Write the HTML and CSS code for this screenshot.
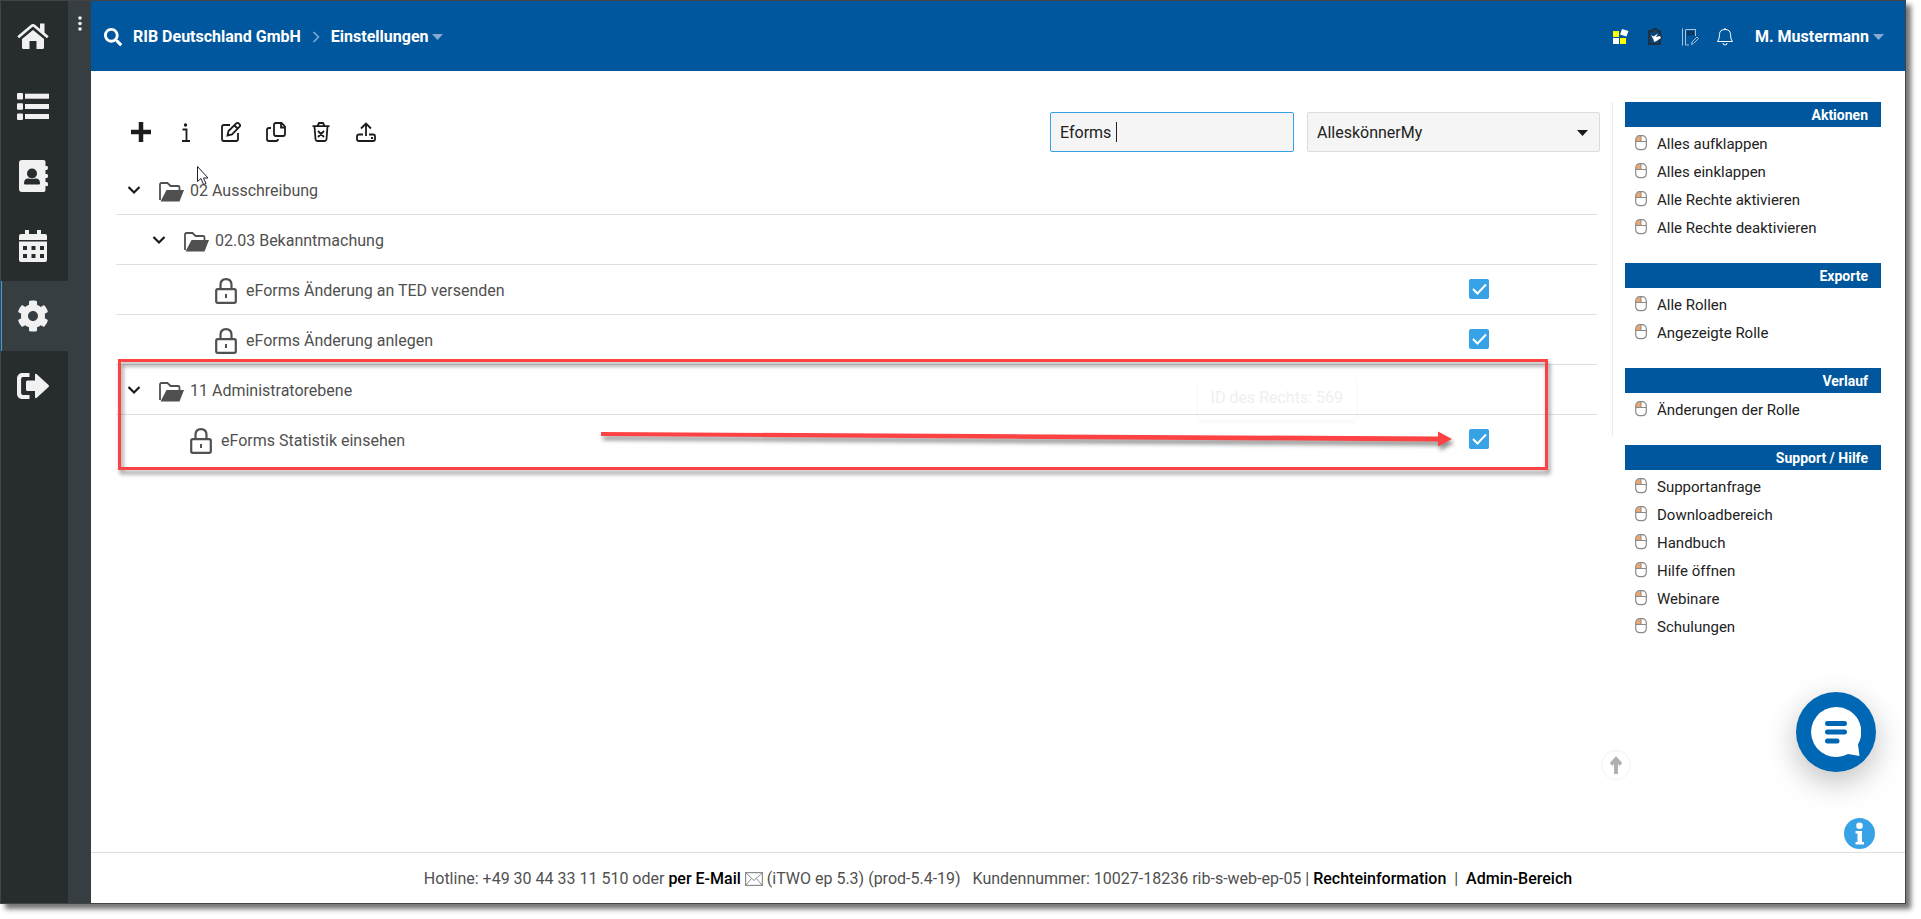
FILE: index.html
```html
<!DOCTYPE html>
<html lang="de">
<head>
<meta charset="utf-8">
<meta name="viewport" content="width=device-width, initial-scale=1">
<title>Einstellungen – RIB Deutschland GmbH</title>
<link rel="stylesheet" href="styles.css">
</head>
<body>
<svg class="sprite" aria-hidden="true">
  <symbol id="mouse" viewBox="0 0 12 16"><path d="M1 5.5Q1 1 6 1V6H1z" fill="#f4a468"/><rect x=".7" y=".7" width="10.6" height="14" rx="4" fill="none" stroke="#8a8a8a" stroke-width="1.2"/><path d="M1 6.5h10M6 1v5.500" stroke="#8a8a8a" fill="none"/></symbol>
  <symbol id="chevron" viewBox="0 0 14 10"><path d="M1.500 2l5.500 5.500L12.500 2" fill="none" stroke="#1a1a1a" stroke-width="2.200"/></symbol>
  <symbol id="folder" viewBox="0 0 25 20"><path d="M1 18V2.500Q1 1 2.500 1h6l3 3H19q1.500 0 1.500 1.500V8" fill="none" stroke="#505050" stroke-width="1.800"/><path d="M7.500 8H25l-4.500 11.500H1.500z" fill="#505050"/></symbol>
  <symbol id="lock" viewBox="0 0 22 26"><rect x="1.200" y="11.200" width="19.600" height="13.600" rx="1.500" fill="none" stroke="#505050" stroke-width="2.200"/><path d="M5.500 11V7Q5.500 1.200 11 1.200T16.500 7v4" fill="none" stroke="#505050" stroke-width="2.200"/><path d="M11 16v4" stroke="#505050" stroke-width="2"/></symbol>
</svg>
<div class="app">
  <nav class="rail" aria-label="Hauptnavigation">
    <a class="rail-item" href="#" aria-label="Startseite"><svg width="32" height="26" viewBox="0 0 32 26" fill="#f1f1f1"><path d="M16 7L5 16V24.500Q5 26 6.500 26h6v-8h7v8h6q1.500 0 1.500-1.500V16z"/><path d="M1.200 14.200L14.500 3Q16 1.700 17.500 3L30.800 14.200" fill="none" stroke="#f1f1f1" stroke-width="2.800"/><path d="M23 .500h4.500v10L23 6.500z"/></svg></a>
    <a class="rail-item" href="#" aria-label="Liste"><svg width="32" height="27" viewBox="0 0 32 27" fill="#f1f1f1"><rect y="0" width="6" height="6.500" rx="1"/><rect y="10.200" width="6" height="6.500" rx="1"/><rect y="20.400" width="6" height="6.500" rx="1"/><rect x="8" y=".700" width="24" height="5"/><rect x="8" y="11" width="24" height="5"/><rect x="8" y="21" width="24" height="5"/></svg></a>
    <a class="rail-item" href="#" aria-label="Kontakte"><svg width="29" height="32" viewBox="0 0 29 32"><path d="M3 0h21.500q2 0 2 2v4H28q1 0 1 1.500T28 10h-1.500v4H28q1 0 1 2t-1 2h-1.500v4H28q1 0 1 2.500t-1 1.500h-1.500v4q0 2-2 2H3q-3 0-3-3V3q0-3 3-3z" fill="#f1f1f1"/><circle cx="13" cy="13.500" r="5" fill="#272d2f"/><path d="M5 23.500q0-5.500 5-5 3 1 6 0 5-.5 5 5 0 1-1 1H6q-1 0-1-1z" fill="#272d2f"/></svg></a>
    <a class="rail-item" href="#" aria-label="Kalender"><svg width="28" height="32" viewBox="0 0 28 32"><path d="M0 10V6q0-2 2-2h4V0h4v4h8V0h4v4h4q2 0 2 2v4zM0 11.500h28V30q0 2-2 2H2q-2 0-2-2z" fill="#f1f1f1"/><path d="M4 16h4v4H4zm8.500 0h4v4h-4zm8.500 0h4v4h-4zM4 24h4v4H4zm8.500 0h4v4h-4zm8.500 0h4v4h-4z" fill="#272d2f"/></svg></a>
    <a class="rail-item rail-active" href="#" aria-label="Einstellungen"><svg width="32" height="32" viewBox="0 0 512 512"><path fill="#f1f1f1" d="M487.400 315.700l-42.600-24.600c4.300-23.200 4.300-47 0-70.200l42.600-24.600c4.900-2.800 7.100-8.600 5.500-14-11.100-35.600-30-67.800-54.700-94.600-3.800-4.100-10-5.100-14.800-2.300L380.800 110c-17.900-15.400-38.500-27.300-60.800-35.100V25.800c0-5.600-3.900-10.500-9.400-11.700-36.700-8.200-74.300-7.800-109.200 0-5.500 1.200-9.400 6.100-9.400 11.700V75c-22.200 7.900-42.800 19.800-60.800 35.100L88.700 85.500c-4.900-2.800-11-1.900-14.800 2.300-24.700 26.700-43.600 58.900-54.700 94.600-1.700 5.400.6 11.200 5.500 14L67.300 221c-4.300 23.200-4.300 47 0 70.200l-42.600 24.600c-4.900 2.800-7.100 8.600-5.500 14 11.100 35.600 30 67.800 54.700 94.600 3.800 4.100 10 5.100 14.800 2.300l42.600-24.600c17.900 15.400 38.500 27.300 60.800 35.100v49.200c0 5.600 3.900 10.500 9.400 11.700 36.700 8.200 74.300 7.800 109.200 0 5.500-1.200 9.400-6.100 9.400-11.700v-49.200c22.200-7.900 42.800-19.800 60.800-35.100l42.600 24.600c4.900 2.800 11 1.900 14.800-2.300 24.700-26.700 43.600-58.900 54.700-94.600 1.500-5.500-.7-11.300-5.600-14.100zM256 336c-44.100 0-80-35.900-80-80s35.900-80 80-80 80 35.900 80 80-35.900 80-80 80z"/></svg></a>
    <a class="rail-item" href="#" aria-label="Abmelden"><svg width="32" height="26" viewBox="0 0 32 26"><path d="M12.500 2H6Q2 2 2 6v14q0 4 4 4h6.500" fill="none" stroke="#f1f1f1" stroke-width="4.200"/><path d="M9 9q0-1.500 1.500-1.500H18V1.500Q18 .500 19.500 1L31.500 12q1 1 0 2L19.500 25q-1.500.5-1.500-1v-6h-7.500Q9 18 9 16.500z" fill="#f1f1f1"/></svg></a>
  </nav>
  <div class="subrail"><button class="dots" type="button" aria-label="Menü"><svg width="4" height="16" viewBox="0 0 4 16" fill="#f1f1f1"><circle cx="2" cy="2" r="1.800"/><circle cx="2" cy="7.500" r="1.800"/><circle cx="2" cy="13" r="1.800"/></svg></button></div>
  <div class="page">
    <header class="topbar">
      <button class="icon-button search" type="button" aria-label="Suche"><svg width="18" height="18" viewBox="0 0 512 512"><path fill="#fff" d="M505 442.700L405.300 343c-4.500-4.500-10.600-7-17-7H372c27.600-35.300 44-79.700 44-128C416 93.100 322.900 0 208 0S0 93.100 0 208s93.100 208 208 208c48.300 0 92.700-16.400 128-44v16.300c0 6.400 2.500 12.500 7 17l99.700 99.700c9.400 9.400 24.600 9.400 33.900 0l28.300-28.300c9.400-9.400 9.400-24.600.1-34zM208 336c-70.700 0-128-57.200-128-128 0-70.700 57.200-128 128-128 70.700 0 128 57.200 128 128 0 70.700-57.200 128-128 128z"/></svg></button>
      <a class="crumb" href="#">RIB Deutschland GmbH</a>
      <svg class="crumb-sep" width="8" height="12" viewBox="0 0 8 12"><path d="M1.500 1l5 5-5 5" fill="none" stroke="#85abd0" stroke-width="1.500"/></svg>
      <a class="crumb" href="#">Einstellungen<svg class="caret" width="11" height="6" viewBox="0 0 11 6"><path d="M0 0h11L5.500 6z" fill="#85abd0"/></svg></a>
      <div class="top-actions">
        <button class="icon-button" type="button" aria-label="Module"><svg width="18" height="18" viewBox="0 0 18 18"><path d="M2 3h6v6H2z" fill="#ff0"/><path d="M2 10h6v6H2z" fill="#fff"/><path d="M9 10h6v6H9z" fill="#ff0"/><path d="M11.500 2l5 1.500-1.500 4-5-1.500z" fill="#fff" stroke="#fff" stroke-width="1.500"/></svg></button>
        <button class="icon-button" type="button" aria-label="Aufgaben"><svg width="18" height="18" viewBox="0 0 18 18"><path d="M3 3h3l2-2h2l2 2h2v4l1.500 2-1.500 2v5H3z" fill="#0b4474" stroke="#1d3040" stroke-width="1.800"/><path d="M5 7l2.500 1.500L12 5.500l-2 3.500L14 8l1 2-4.500 3L8 14l-.500-2.500z" fill="#fff"/></svg></button>
        <button class="icon-button" type="button" aria-label="Notizen"><svg width="18" height="18" viewBox="0 0 18 18" fill="none" stroke="#a9c5de"><path d="M1.500.500v17M4.500 17V1.500M14.500 1v7M4.500 17H8M5 1.500h9"/><path d="M7 4h5v2.500H7z" fill="#00579d" stroke="#122c44" stroke-width="1.500"/><path d="M10.500 16.500l.5-2.500 5-5 1.500 1.500-5 5z"/></svg></button>
        <button class="icon-button" type="button" aria-label="Benachrichtigungen"><svg width="18" height="18" viewBox="0 0 18 18" fill="none" stroke="#fff"><path d="M1.500 13.500q2-2 2-7Q3.500 1.500 9 1.500t5.500 5q0 5 2 7z"/><path d="M7 15q0 2 2 2t2-2M9 0v1.500"/></svg></button>
        <a class="crumb user" href="#">M. Mustermann<svg class="caret" width="11" height="6" viewBox="0 0 11 6"><path d="M0 0h11L5.500 6z" fill="#85abd0"/></svg></a>
      </div>
    </header>
    <div class="content">
      <main class="main">
        <div class="toolbar">
          <div class="tools">
            <button class="tool" type="button" aria-label="Neu"><svg width="20" height="20" viewBox="0 0 20 20"><path d="M10 0v20M0 10h20" stroke="#1c1c1c" stroke-width="4.500"/></svg></button>
            <button class="tool" type="button" aria-label="Info"><svg width="20" height="20" viewBox="0 0 20 20"><circle cx="9.500" cy="3" r="1.700" fill="#1c1c1c"/><path d="M6.500 7.500h4V19M6 19h8" fill="none" stroke="#1c1c1c" stroke-width="1.800"/></svg></button>
            <button class="tool" type="button" aria-label="Bearbeiten"><svg width="20" height="20" viewBox="0 0 20 20" fill="none" stroke="#1c1c1c" stroke-width="1.800"><path d="M9 3H3Q1 3 1 5v12q0 2 2 2h12q2 0 2-2v-6"/><path d="M6.500 13.500l1-4.500L15.500 1.200q1-.700 2 0l1.300 1.300q.700 1 0 2L11 12.500zM13.500 3.500l3 3"/></svg></button>
            <button class="tool" type="button" aria-label="Kopieren"><svg width="20" height="20" viewBox="0 0 20 20" fill="none" stroke="#1c1c1c" stroke-width="1.800"><path d="M10 1h5.500L19 4.500V12q0 2-2 2h-7q-2 0-2-2V3q0-2 2-2z"/><path d="M15 1v4.500h4M5 6H3Q1 6 1 8v9q0 2 2 2h7q2 0 2-2"/></svg></button>
            <button class="tool" type="button" aria-label="Löschen"><svg width="20" height="20" viewBox="0 0 20 20" fill="none" stroke="#1c1c1c" stroke-width="1.800"><path d="M1.500 4.200h17M3.500 4.500L4.500 17q.200 2 2 2h7q1.800 0 2-2l1-12.500M6.500 4l1.500-3h4l1.500 3M7 9l6 6m0-6l-6 6"/></svg></button>
            <button class="tool" type="button" aria-label="Hochladen"><svg width="20" height="20" viewBox="0 0 20 20" fill="none" stroke="#1c1c1c" stroke-width="1.800"><path d="M10 14V1.500M5 6.500l5-5 5 5M7 12.500H3q-2 0-2 2V17q0 2 2 2h14q2 0 2-2v-2.500q0-2-2-2h-4M15 16h2"/></svg></button>
          </div>
          <div class="filters">
            <div class="field search-field"><input class="control control-focus" type="text" value="Eforms " aria-label="Rechte suchen"><span class="text-cursor"></span></div>
            <div class="field role-field"><select class="control" aria-label="Rolle"><option>AlleskönnerMy</option></select><svg class="select-caret" width="11" height="6" viewBox="0 0 11 6"><path d="M0 0h11L5.500 6z" fill="#1a1a1a"/></svg></div>
          </div>
        </div>
        <div class="tree">
          <div class="row"><button class="toggle" type="button" aria-label="Einklappen"><svg width="14" height="10"><use href="#chevron"/></svg></button><svg class="folder" width="25" height="20"><use href="#folder"/></svg><span class="name">02 Ausschreibung</span><svg class="pointer" width="14" height="21" viewBox="0 0 14 21"><path d="M1.500 1.500v15l3.500-3 2.500 6 2.500-1-2.500-5.500h4.500z" fill="#fff" stroke="#222236" stroke-width="1"/></svg></div>
          <div class="row level-1"><button class="toggle" type="button" aria-label="Einklappen"><svg width="14" height="10"><use href="#chevron"/></svg></button><svg class="folder" width="25" height="20"><use href="#folder"/></svg><span class="name">02.03 Bekanntmachung</span></div>
          <div class="row level-2"><svg class="lock" width="22" height="26"><use href="#lock"/></svg><label class="name" for="r1">eForms Änderung an TED versenden</label><input class="check" type="checkbox" id="r1" checked></div>
          <div class="row level-2"><svg class="lock" width="22" height="26"><use href="#lock"/></svg><label class="name" for="r2">eForms Änderung anlegen</label><input class="check" type="checkbox" id="r2" checked></div>
          <div class="highlighted">
            <div class="row"><button class="toggle" type="button" aria-label="Einklappen"><svg width="14" height="10"><use href="#chevron"/></svg></button><svg class="folder" width="25" height="20"><use href="#folder"/></svg><span class="name">11 Administratorebene</span></div>
            <div class="row level-1 last"><svg class="lock" width="22" height="26"><use href="#lock"/></svg><label class="name" for="r3">eForms Statistik einsehen</label><input class="check" type="checkbox" id="r3" checked></div>
            <div class="tooltip" role="tooltip">ID des Rechts: 569</div>
            <div class="marker"></div>
            <svg class="arrow" width="852" height="16" viewBox="0 0 852 16"><path d="M1 1L838 5.500V.500L852 8l-14 7.500v-5L1 5z" fill="#fc4242"/></svg>
          </div>
        </div>
      </main>
      <aside class="side">
        <div class="side-group">
          <section class="panel"><h2>Aktionen</h2><ul>
            <li><svg width="12" height="16"><use href="#mouse"/></svg><a href="#">Alles aufklappen</a></li>
            <li><svg width="12" height="16"><use href="#mouse"/></svg><a href="#">Alles einklappen</a></li>
            <li><svg width="12" height="16"><use href="#mouse"/></svg><a href="#">Alle Rechte aktivieren</a></li>
            <li><svg width="12" height="16"><use href="#mouse"/></svg><a href="#">Alle Rechte deaktivieren</a></li></ul></section>
          <section class="panel"><h2>Exporte</h2><ul>
            <li><svg width="12" height="16"><use href="#mouse"/></svg><a href="#">Alle Rollen</a></li>
            <li><svg width="12" height="16"><use href="#mouse"/></svg><a href="#">Angezeigte Rolle</a></li></ul></section>
          <section class="panel"><h2>Verlauf</h2><ul>
            <li><svg width="12" height="16"><use href="#mouse"/></svg><a href="#">Änderungen der Rolle</a></li></ul></section>
        </div>
        <div class="side-help">
          <section class="panel"><h2>Support / Hilfe</h2><ul>
            <li><svg width="12" height="16"><use href="#mouse"/></svg><a href="#">Supportanfrage</a></li>
            <li><svg width="12" height="16"><use href="#mouse"/></svg><a href="#">Downloadbereich</a></li>
            <li><svg width="12" height="16"><use href="#mouse"/></svg><a href="#">Handbuch</a></li>
            <li><svg width="12" height="16"><use href="#mouse"/></svg><a href="#">Hilfe öffnen</a></li>
            <li><svg width="12" height="16"><use href="#mouse"/></svg><a href="#">Webinare</a></li>
            <li><svg width="12" height="16"><use href="#mouse"/></svg><a href="#">Schulungen</a></li></ul></section>
        </div>
      </aside>
    </div>
    <footer class="footer"><p>Hotline: +49 30 44 33 11 510 oder <a href="#">per E-Mail</a> <svg class="mail" width="18" height="14" viewBox="0 0 18 14" fill="none" stroke="#8c8c8c"><rect x=".500" y=".500" width="17" height="13" stroke-width="1.400"/><path d="M1 1l8 7.500L17 1M1 13l5.500-6.500M17 13l-5.500-6.500"/></svg> (iTWO ep 5.3) (prod-5.4-19) &nbsp; Kundennummer: 10027-18236 rib-s-web-ep-05 | <a href="#">Rechteinformation</a> &nbsp;|&nbsp; <a href="#">Admin-Bereich</a></p></footer>
  </div>
  <button class="float to-top" type="button" aria-label="Nach oben"><svg width="12" height="18" viewBox="0 0 12 18"><path d="M6 18V3M1 8.500L6 3l5 5.500" fill="none" stroke="#b0b0b0" stroke-width="4"/></svg></button>
  <button class="float chat" type="button" aria-label="Chat"><svg width="50" height="50" viewBox="0 0 50 50"><path d="M25 0a25 25 0 0 1 22 37.500L48.500 49 37 47A25 25 0 1 1 25 0z" fill="#fff"/><path d="M16.500 16.500h17M16.500 25h17M16.500 34h9.500" stroke="#0067b4" stroke-width="5" stroke-linecap="round"/></svg></button>
  <button class="float info" type="button" aria-label="Information"><svg width="31" height="31" viewBox="0 0 31 31"><circle cx="15.500" cy="15.500" r="15.500" fill="#37a3e6"/><circle cx="15.500" cy="7.800" r="3.300" fill="#fff"/><path d="M11.500 13h6.500v11h2v2.500h-8.500V24h2v-8.500h-2z" fill="#fff"/></svg></button>
</div>
</body>
</html>
```
FILE: styles.css
```css
* { box-sizing: border-box; }
body {
  margin: 0;
  padding: 0 15px 15px 0;
  min-height: 100vh;
  display: flex;
  background: #fff;
  font: 16px/24px Roboto, sans-serif;
  color: #505050;
}
a { color: inherit; text-decoration: none; }
button { border: 0; padding: 0; margin: 0; background: none; font: inherit; cursor: pointer; }
svg { display: block; flex: none; }
.sprite { position: absolute; width: 0; height: 0; }

.app {
  position: relative;
  flex: 1;
  display: flex;
  border: 1px solid #444;
  background: #fff;
  box-shadow: 5px 5px 5px rgba(0, 0, 0, .55);
}
.rail { width: 67px; background: #272d2f; }
.rail-item { height: 70px; display: flex; align-items: center; justify-content: center; padding-right: 3px; }
.rail-active { background: #363e41; border-left: 1px solid #37a3e6; padding-right: 5px; }
.subrail { width: 23px; background: #363e41; }
.dots { display: block; margin: 15px auto 0; }

.page { flex: 1; min-width: 0; display: flex; flex-direction: column; }
.topbar {
  height: 70px;
  display: flex;
  align-items: center;
  padding: 2px 21px 0 13px;
  background: #00579d;
  color: #fff;
}
.crumb { display: flex; align-items: center; gap: 4px; font-weight: 700; color: #fff; }
.search { margin-right: 11px; }
.crumb-sep { margin: 0 11px; }
.top-actions { margin-left: auto; display: flex; align-items: center; gap: 17px; }
.user { margin-left: 4px; }

.content { flex: 1; display: flex; gap: 12px; padding: 31px 24px 24px 25px; }
.main { flex: 1; min-width: 0; }
.toolbar { display: flex; justify-content: space-between; margin: 10px 0 13px; }
.tools { display: flex; padding-left: 2px; }
.tool { width: 45px; height: 40px; display: flex; align-items: center; justify-content: center; }
.filters { display: flex; gap: 13px; }
.field { position: relative; }
.search-field { width: 244px; }
.role-field { width: 293px; }
.control {
  width: 100%;
  height: 40px;
  padding: 1px 9px 0;
  appearance: none;
  border: 1px solid #dcdcdc;
  border-radius: 2px;
  background: #f5f5f5;
  color: #222;
  font: inherit;
}
.control-focus { border-color: #37a3e6; }
.text-cursor { position: absolute; left: 66px; top: 10px; width: 1px; height: 20px; background: #222; }
.select-caret { position: absolute; right: 12px; top: 18px; pointer-events: none; }

.tree { margin-right: 3px; }
.row {
  position: relative;
  height: 50px;
  display: flex;
  align-items: center;
  padding-left: 11px;
  border-bottom: 1px solid #e0e0e0;
}
.last { border-color: transparent; }
.level-1 { padding-left: 36px; }
.level-2 { padding-left: 61px; }
.name { padding-top: 2px; }
.toggle { width: 14px; }
.folder { margin: 4px 6px 0 18px; }
.lock { margin: 2px 9px 0 38px; }
.check {
  appearance: none;
  width: 20px;
  height: 20px;
  margin: 0 108px 2px auto;
  border-radius: 2px;
  background: #37a3e6 url("data:image/svg+xml,%3Csvg xmlns='http://www.w3.org/2000/svg' viewBox='0 0 20 20'%3E%3Cpath d='M4 10l4.500 4.500L17 5.500' fill='none' stroke='white' stroke-width='2'/%3E%3C/svg%3E");
}
.pointer { position: absolute; left: 80px; top: 0; }

.highlighted { position: relative; }
.marker {
  position: absolute;
  inset: -6px 49px -5px 2px;
  border: 3px solid #fc4242;
  filter: drop-shadow(2px 4px 2px rgba(0, 0, 0, .45));
  pointer-events: none;
}
.arrow { position: absolute; right: 145px; top: 66px; filter: drop-shadow(2px 4px 2px rgba(0, 0, 0, .45)); pointer-events: none; }
.tooltip {
  position: absolute;
  right: 241px;
  top: 11px;
  padding: 10px 13px;
  border-radius: 4px;
  color: #efefef;
  box-shadow: 0 2px 4px rgba(0, 0, 0, .04);
}

.side { width: 269px; }
.side-group { border-left: 1px solid #ebebeb; padding: 0 0 12px 12px; }
.side-help { padding: 9px 0 0 13px; }
.panel + .panel { margin-top: 21px; }
.panel h2 {
  margin: 0;
  padding: 1px 13px 0;
  background: #00579d;
  color: #fff;
  font-size: 14px;
  font-weight: 700;
  line-height: 24px;
  text-align: right;
}
.panel ul { margin: 0; padding: 3px 0 0 10px; list-style: none; }
.panel li { display: flex; align-items: center; gap: 10px; height: 28px; color: #222; font-size: 15px; }
.panel li svg { margin-bottom: 2px; }

.footer { height: 51px; border-top: 1px solid #e0e0e0; text-align: center; }
.footer p { margin: 0; padding-top: 14px; }
.footer a { color: #000; font-weight: 500; }
.mail { display: inline-block; vertical-align: -2px; }

.float { position: absolute; display: flex; align-items: center; justify-content: center; border-radius: 50%; }
.to-top { right: 274px; bottom: 123px; width: 30px; height: 30px; border: 1px solid #f2f2f2; }
.chat { right: 29px; bottom: 131px; width: 80px; height: 80px; background: #0067b4; box-shadow: 0 10px 30px rgba(0, 0, 0, .25); }
.info { right: 30px; bottom: 54px; width: 31px; height: 31px; }
```
